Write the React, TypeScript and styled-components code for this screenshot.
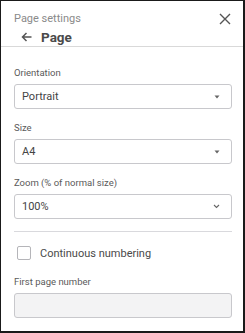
import styled, { createGlobalStyle } from "styled-components";

const GlobalStyle = createGlobalStyle`
  html, body {
    margin: 0;
    padding: 0;
    background: #fff;
  }
  * {
    box-sizing: border-box;
  }
`;

const Panel = styled.div`
  width: 245px;
  height: 333px;
  border-style: solid;
  border-color: #1a1a1a;
  border-width: 1px 2px 2px 1px;
  font-family: Roboto, "Liberation Sans", sans-serif;
  color: #333;
  display: flex;
  flex-direction: column;
  background: #fff;
`;

const Header = styled.div`
  position: relative;
  padding: 11px 13px 0 13px;
  height: 57px;
  border-bottom: 1px solid #d9d9d9;
`;

const Caption = styled.div`
  font-size: 11px;
  color: #8a8a8a;
  line-height: 14px;
`;

const TitleRow = styled.div`
  display: flex;
  align-items: center;
  gap: 9px;
  margin-top: 2px;
  padding-left: 7px;
`;

const Title = styled.div`
  font-size: 13.5px;
  font-weight: 700;
  color: #4a4a4a;
  line-height: 18px;
`;

const CloseButton = styled.div`
  position: absolute;
  top: 11px;
  right: 11px;
  width: 14px;
  height: 14px;
  display: flex;
  align-items: center;
  justify-content: center;
`;

const Body = styled.div`
  padding: 20px 11px 0 13px;
  display: flex;
  flex-direction: column;
`;

const Field = styled.div`
  display: flex;
  flex-direction: column;
  margin-bottom: 13px;
`;

const Label = styled.div`
  font-size: 9.5px;
  color: #5a5a5a;
  line-height: 12px;
  margin-bottom: 5px;
`;

const Select = styled.div`
  height: 25px;
  border: 1px solid #c8c8cc;
  border-radius: 3px;
  display: flex;
  align-items: center;
  justify-content: space-between;
  padding: 0 11px 0 7px;
  font-size: 11px;
  color: #444;
`;

const Input = styled.div<{ disabled?: boolean }>`
  height: 25px;
  border: 1px solid #c8c8cc;
  border-radius: 3px;
  background: ${({ disabled }) => (disabled ? "#f3f3f4" : "#fff")};
`;

const Divider = styled.div`
  height: 1px;
  background: #d9d9dd;
  margin: -1px 0 14px 0;
`;

const CheckRow = styled.label`
  display: flex;
  align-items: center;
  gap: 9px;
  padding-left: 3px;
  font-size: 11px;
  color: #4a4a4a;
  margin-bottom: 16px;
`;

const Box = styled.span`
  width: 14px;
  height: 14px;
  border: 1px solid #b5b5b9;
  border-radius: 2px;
  background: #fff;
`;

const Caret = () => (
  <svg width="6" height="4" viewBox="0 0 6 4">
    <path d="M0.5 0.5h5L3 3.5z" fill="#666" />
  </svg>
);

const Chevron = () => (
  <svg width="7" height="5" viewBox="0 0 7 5">
    <path d="M1 1l2.5 2.5L6 1" fill="none" stroke="#666" strokeWidth="1.1" />
  </svg>
);

export default function App() {
  return (
    <>
      <GlobalStyle />
      <Panel>
        <Header>
          <Caption>Page settings</Caption>
          <TitleRow>
            <svg width="11" height="10" viewBox="0 0 11 10">
              <path d="M10.5 5H1.5M5.5 1L1.5 5l4 4" fill="none" stroke="#555" strokeWidth="1.5" />
            </svg>
            <Title>Page</Title>
          </TitleRow>
          <CloseButton>
            <svg width="12" height="12" viewBox="0 0 12 12">
              <path d="M1 1l10 10M11 1L1 11" stroke="#555" strokeWidth="1.4" />
            </svg>
          </CloseButton>
        </Header>
        <Body>
          <Field>
            <Label>Orientation</Label>
            <Select>
              Portrait
              <Caret />
            </Select>
          </Field>
          <Field>
            <Label>Size</Label>
            <Select>
              A4
              <Caret />
            </Select>
          </Field>
          <Field>
            <Label>Zoom (% of normal size)</Label>
            <Select>
              100%
              <Chevron />
            </Select>
          </Field>
          <Divider />
          <CheckRow>
            <Box />
            Continuous numbering
          </CheckRow>
          <Field>
            <Label>First page number</Label>
            <Input disabled />
          </Field>
        </Body>
      </Panel>
    </>
  );
}
